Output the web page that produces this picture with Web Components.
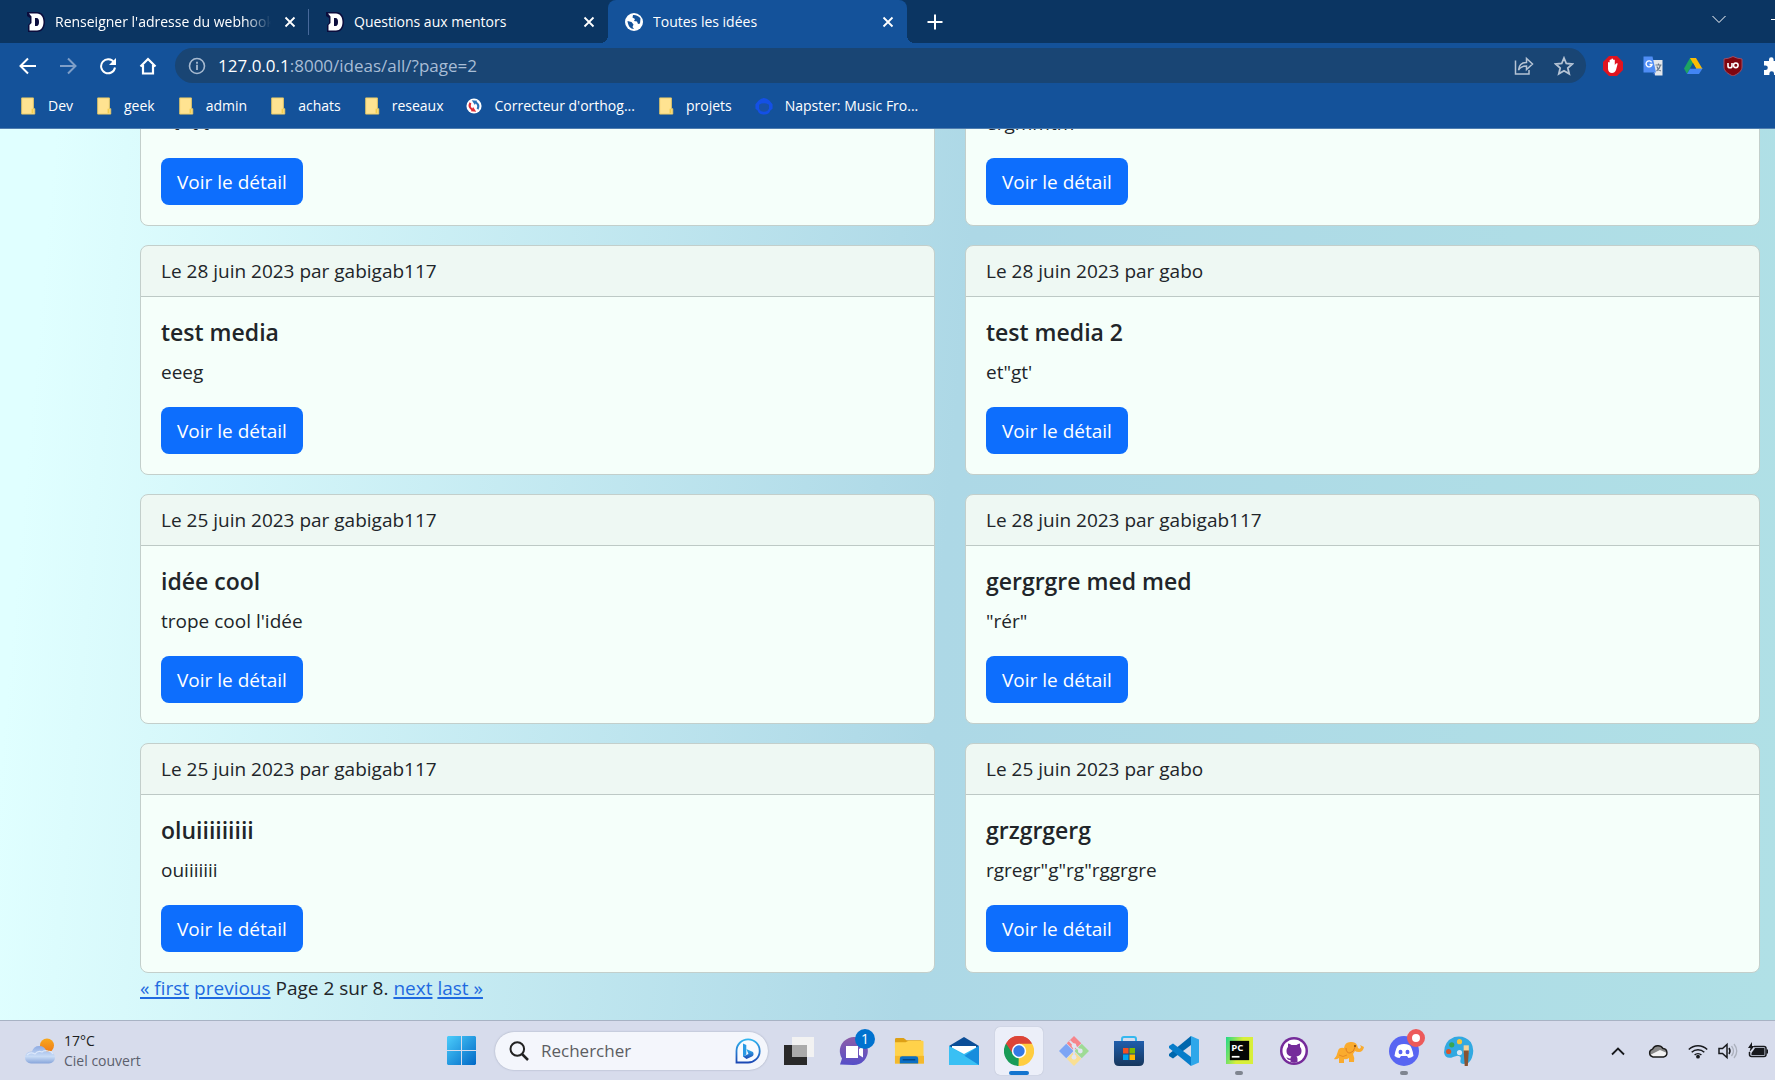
<!DOCTYPE html>
<html lang="fr">
<head>
<meta charset="utf-8">
<title>Toutes les idées</title>
<style>
  html, body { height: 100%; margin: 0; }
  body {
    display: flex;
    flex-direction: column;
    overflow: hidden;
    font-family: "Open Sans", "Noto Sans", sans-serif;
    color: #212529;
  }
</style>
</head>
<body>
<browser-chrome></browser-chrome>
<ideas-page>
  <idea-card author="gabigab117" date="28 juin 2023" heading="test">"'t"'t't"</idea-card>
  <idea-card author="gabo" date="28 juin 2023" heading="test">ergmmtm</idea-card>
  <idea-card author="gabigab117" date="28 juin 2023" heading="test media">eeeg</idea-card>
  <idea-card author="gabo" date="28 juin 2023" heading="test media 2">et"gt'</idea-card>
  <idea-card author="gabigab117" date="25 juin 2023" heading="idée cool">trope cool l'idée</idea-card>
  <idea-card author="gabigab117" date="28 juin 2023" heading="gergrgre med med">"rér"</idea-card>
  <idea-card author="gabigab117" date="25 juin 2023" heading="oluiiiiiiiii">ouiiiiiii</idea-card>
  <idea-card author="gabo" date="25 juin 2023" heading="grzgrgerg">rgregr"g"rg"rggrgre</idea-card>
  <page-nav slot="nav"></page-nav>
</ideas-page>
<task-bar></task-bar>

<script>
// Icônes partagées : [viewBox, contenu]
const ICONS = {
  site: ['0 0 20 20', '<path d="M1 0h10c5 0 8 4 8 10s-3 10-8 10H2v-7l2-2V6L1 4z" fill="#0b0c3c"/><path d="M3 1.500h8c4 0 6.500 3.500 6.500 8.500s-2.500 8.500-6.500 8.500H3.500v-5.500L5.500 11V4.500zM9 6v8h1.500c2 0 2.500-2 2.500-4s-.5-4-2.500-4z" fill="#fff" fill-rule="evenodd"/>'],
  globe: ['0 0 20 20', '<circle cx="10" cy="10" r="9" fill="#fff"/><path d="M3.500 9l4 1 2 2.500-1 2.500 1.500 2c-3.500 0-6-3-6.500-8zM9 3l-.5 2.500L11 7l-1 2 3 .5 1 2.500 2-.5.500-5C15 4 12 2.800 9 3z" fill="#14529a"/>'],
  close: ['0 0 12 12', '<path d="M1.500 1.500l9 9M10.500 1.500l-9 9" stroke="#fff" stroke-width="1.800"/>'],
  plus: ['0 0 16 16', '<path d="M8 .5v15M.5 8h15" stroke="#fff" stroke-width="2"/>'],
  chevronDown: ['0 0 14 14', '<path d="M.5 4L7 10.500 13.500 4" fill="none" stroke="#fff"/>'],
  minimize: ['0 0 12 12', '<path d="M0 6.500h12" stroke="#fff"/>'],
  back: ['0 0 18 18', '<path d="M17 9H2M9 1.500L1.500 9 9 16.500" fill="none" stroke="#fff" stroke-width="2"/>'],
  forward: ['0 0 18 18', '<path d="M1 9h15M9 1.500L16.500 9 9 16.500" fill="none" stroke="#7f9fc8" stroke-width="2"/>'],
  reload: ['0 0 18 18', '<path d="M15 5.500A7 7 0 1 0 16 10.500" fill="none" stroke="#fff" stroke-width="2"/><path d="M17 1v7h-7z" fill="#fff"/>'],
  home: ['0 0 18 18', '<path d="M1.500 9.500L9 2l7.500 7.500M4 8v8.500h10V8" fill="none" stroke="#fff" stroke-width="2.200"/>'],
  info: ['0 0 18 18', '<circle cx="9" cy="9" r="7.500" fill="none" stroke="#a7bad0" stroke-width="1.600"/><path d="M9 7.800v5.200M9 4.800v1.900" stroke="#a7bad0" stroke-width="1.800"/>'],
  share: ['0 0 20 20', '<path d="M1.500 4.500V18H15v-4M4.500 14C5 9 8 6.500 12.500 6.500V2.500L18.500 8l-6 5.500V10C9 10 6.500 11 4.500 14z" fill="none" stroke="#b5c3d4" stroke-width="1.500"/>'],
  star: ['0 0 20 20', '<path d="M10 2l2.300 5.500 6 .5-4.500 4 1.400 5.800L10 14.700l-5.200 3.100L6.200 12 1.700 8l6-.5z" fill="none" stroke="#b5c3d4" stroke-width="1.800"/>'],
  hand: ['0 0 20 20', '<path d="M6 0h8l6 6v8l-6 6H6l-6-6V6z" fill="#e1131f"/><path d="M5 10V6.500q.8-1 1.600 0V4q.9-1 1.700 0V3q.9-1 1.800 0v1q.9-1 1.700 0v5l1.200-1.500q1-.5 1.700 0L13 14q-1.200 3-4 3-3.500 0-4-4z" fill="#fff"/>'],
  translate: ['0 0 20 20', '<path d="M9 4h10.500v15.500H12z" fill="#e3e6ea"/><path d="M11 17l1.500 3-3-3z" fill="#3367d6"/><path d="M12.500 9h6M15.500 7.500V9M17.500 9q-1 4-4 6M13.800 10.500q1.500 3.500 4 4.500" fill="none" stroke="#68788a" stroke-width="1.200"/><path d="M.5.500h9L13 16.500H.5z" fill="#4f8df5"/><path d="M8.600 6.300A3 3 0 1 0 9 8.500H6.500" fill="none" stroke="#fff" stroke-width="1.400"/>'],
  drive: ['0 0 20 20', '<path d="M7 2h6L4 18l-3-5.500z" fill="#1da462"/><path d="M7 2h6l6.500 11h-6.300z" fill="#fbbc04"/><path d="M4 18l3.200-5.500H19.500L16 18z" fill="#4285f4"/><path d="M10 7l3.200 5.500H7.200z" fill="#14529a"/>'],
  shield: ['0 0 20 20', '<path d="M10 .5q4 2 9 2.500v8c0 4-4 7-9 9-5-2-9-5-9-9V3q5-.5 9-2.500z" fill="#800610" stroke="#a34d61"/><path d="M5 7v3q0 1.800 2 1.800t2-1.800V7" fill="none" stroke="#fff" stroke-width="1.600"/><circle cx="12.800" cy="9.300" r="2.300" fill="none" stroke="#fff" stroke-width="1.600"/>'],
  puzzle: ['0 0 20 20', '<path d="M1 5h5V3.500a2.300 2.300 0 0 1 4.600 0V5H16v5h1a2.300 2.300 0 0 1 0 4.600h-1V19h-5v-1.500a2.300 2.300 0 0 0-4.600 0V19H1v-5h1.500a2.300 2.300 0 0 0 0-4.600H1z" fill="#fff"/>'],
  folder: ['0 0 16 20', '<path d="M1 1h13v12h1.500v6H1z" fill="#ffe391" stroke="#e9c964"/><path d="M12 18v-5h2v5z" fill="#f3cd4d"/>'],
  orthog: ['0 0 18 18', '<circle cx="9" cy="9" r="8.500" fill="#fff"/><path d="M5 5.500Q2.500 10 7 13" fill="none" stroke="#df2d35" stroke-width="2.400"/><path d="M8 10l3.500 5.500-6-.5z" fill="#df2d35"/><path d="M13 12.500Q15.500 8 11 5" fill="none" stroke="#2a74b8" stroke-width="2.400"/><path d="M10 8L6.500 2.500l6 .5z" fill="#2a74b8"/>'],
  napster: ['0 0 20 20', '<path d="M4 4Q10-2 16 4l3.500 4v5L17 15q-1 4.500-7 4.500T3 15L.5 13V8z" fill="#1450e6"/><path d="M4.500 8.500q5.500-3 11 0v4q-1 4-5.500 4t-5.500-4z" fill="#1851a7"/>'],

  weather: ['0 0 30 26', '<defs><linearGradient id="c" x2="0" y2="1"><stop stop-color="#8eabe2"/><stop offset=".6" stop-color="#c9dcf6"/><stop offset="1" stop-color="#87a5da"/></linearGradient><linearGradient id="s" x2="0" y2="1"><stop stop-color="#f8a81b"/><stop offset="1" stop-color="#ee7a19"/></linearGradient></defs><circle cx="22" cy="7.500" r="7" fill="url(#s)"/><path d="M6 25.500a6 6 0 0 1 0-12h1a7.500 7.500 0 0 1 14.500 0H24a6 6 0 0 1 0 12z" fill="url(#c)"/><path d="M2 17q3-3.500 8-1 3-4 7-2 2-2 6-1 3 0 5 3" fill="none" stroke="#dce8fb" stroke-width="1.200"/>'],
  start: ['0 0 29 29', '<defs><linearGradient id="w" x2="1" y2="1"><stop stop-color="#4ccdfb"/><stop offset="1" stop-color="#0068c6"/></linearGradient></defs><path d="M1 0h13v14H0V1zM15 0h13l1 1v13H15zM0 15h14v14H1l-1-1zM15 15h14v13l-1 1H15z" fill="url(#w)"/>'],
  search: ['0 0 20 20', '<circle cx="8.300" cy="8" r="6.800" fill="none" stroke="#222" stroke-width="2"/><path d="M13 13l6 6" stroke="#222" stroke-width="2.500"/>'],
  bing: ['0 0 26 26', '<defs><linearGradient id="b" x2="0" y2="1"><stop stop-color="#31b5f0"/><stop offset="1" stop-color="#1c48b4"/></linearGradient></defs><path d="M1.500 24.500V13A11.600 11.600 0 1 1 13 24.500z" fill="#f8fbff" stroke="url(#b)" stroke-width="1.800"/><path d="M8 5.500l3.300 1.500v9.500L8 19z" fill="#299ae5"/><path d="M11.300 11l6.700 3q1.500 3-1 4.500L11.500 21 8 18.500l5.500-2.500z" fill="url(#b)"/>'],
  taskview: ['0 0 30 28', '<path d="M0 8h23v20H0z" fill="#292929"/><path d="M8 0h22v20H8z" fill="#f2f2f2"/><path d="M8 8h15v12H8z" fill="#aaa"/>'],
  chat: ['0 0 30 30', '<defs><linearGradient id="p" x2="0" y2="1"><stop stop-color="#8d5da8"/><stop offset="1" stop-color="#554ec8"/></linearGradient></defs><path d="M1 28.500l2-6A14 14 0 1 1 14 29z" fill="url(#p)"/><path d="M7 10h12v12H7zM20 13l4-2.500v11L20 19z" fill="#fff"/>'],
  explorer: ['0 0 31 28', '<path d="M1 2q0-1.500 1.500-1.500H10L13 3h15v8H1z" fill="#dda016"/><path d="M1 5h11l3-1.500h14.500q1 0 1 1V27H1z" fill="#ffd24a"/><path d="M1 19h30v8H1z" fill="#f4b92c"/><path d="M6 27v-5q0-2.500 2.500-2.500h14q2.500 0 2.500 2.500v5z" fill="#0a6fc5"/><path d="M9 23h13" stroke="#034785" stroke-width="1.500"/>'],
  mail: ['0 0 30 28', '<path d="M0 9L15 0l15 9v5H0z" fill="#0b4e97"/><path d="M3 9h24v12H3z" fill="#fff"/><path d="M0 9l15 8 15-8v19H0z" fill="#32baf1"/><path d="M30 9v19L2 28z" fill="#178ddd"/><path d="M0 9l30 19H0z" fill="#39c0f4"/>'],
  chrome: ['0 0 30 30', '<path d="M15 15L2 7.500A15 15 0 0 1 28 7.500z" fill="#dc4437"/><path d="M15 15L2 7.500A15 15 0 0 0 15 30l6.500-11z" fill="#199b57"/><path d="M15 15l-.5 15A15 15 0 0 0 28 7.500H15l6.500 11z" fill="#ffcd40"/><path d="M2 7.500L9 18l6-10.500h13A15 15 0 0 0 2 7.500z" fill="#dc4437"/><circle cx="15" cy="15" r="7.200" fill="#fff"/><circle cx="15" cy="15" r="5.700" fill="#3579e5"/>'],
  git: ['0 0 31 31', '<path d="M15.500 0l7.500 7.500-7.500 7.500L8 7.500z" fill="#f6858b"/><path d="M7.500 8l7.500 7.500L7.500 23 0 15.500z" fill="#7da5f5"/><path d="M23.500 8l7.500 7.500-7.500 7.500-7.500-7.500z" fill="#9edb95"/><path d="M15.500 16l7.500 7.500-7.500 7.500L8 23.500z" fill="#f9df93"/><path d="M11 5l4.500 4.500V22M16 10l6 5" fill="none" stroke="#dde1ef" stroke-width="2"/><circle cx="15.500" cy="10" r="2.500" fill="#e2e6f2"/><circle cx="22" cy="15.500" r="2.500" fill="#e2e6f2"/><circle cx="15.500" cy="22" r="2.500" fill="#e2e6f2"/>'],
  store: ['0 0 30 30', '<defs><linearGradient id="m" x2="0" y2="1"><stop stop-color="#205eac"/><stop offset="1" stop-color="#17375d"/></linearGradient></defs><path d="M8 6V3q0-2 2-2h10q2 0 2 2v3" fill="none" stroke="#36b8ef" stroke-width="2"/><path d="M0 5h30v20q0 5-5 5H5q-5 0-5-5z" fill="url(#m)"/><path d="M9 12h5.500v5.500H9z" fill="#f25022"/><path d="M15.500 12H21v5.500h-5.500z" fill="#7fba00"/><path d="M9 18.500h5.500V24H9z" fill="#00a4ef"/><path d="M15.500 18.500H21V24h-5.500z" fill="#ffb900"/>'],
  vscode: ['0 0 30 30', '<path d="M22 0l8 3.500v23L22 30z" fill="#2fa7ea"/><path d="M22 0v9L4 22.500 0 20v-2z" fill="#0067ad"/><path d="M22 30v-9L4 7.500 0 10v2z" fill="#087dca"/>'],
  pycharm: ['0 0 28 28', '<defs><linearGradient id="y" x2="1" y2=".3"><stop stop-color="#21d789"/><stop offset=".6" stop-color="#d8ef3a"/></linearGradient></defs><path d="M0 0h28v28H0z" fill="url(#y)"/><path d="M4 4h20v20H4z" fill="#050505"/><text x="5.500" y="14.500" font-family="Open Sans" font-size="10" font-weight="700" fill="#fff">PC</text><path d="M6 20.500h8" stroke="#fff" stroke-width="1.800"/>'],
  github: ['0 0 28 28', '<circle cx="14" cy="14" r="14" fill="#752b9a"/><circle cx="14" cy="14" r="11.500" fill="#fff"/><path d="M6.500 14c0-2 .5-3 1.500-4V6.500q2 0 3.500 1.500h5Q18 6.500 20 6.500V10c1 1 1.500 2 1.500 4 0 4-2.500 5-5 5.300l1 2.200v3.700A11.500 11.500 0 0 1 10.500 25v-2c-3 .5-3-2-4.500-2.500 2-.5 2.500 1.500 4.500 1 0-1 .5-1.700 1-2.200-2.500-.3-5-1.300-5-5.300z" fill="#752b9a"/>'],
  elephant: ['0 0 30 24', '<path d="M10 9q1-7 8-6 5 0 6 6 2 2 3-1l-1-2 4 2q-1 5-5 5-3 0-4-1l-2 3q2 4 1 8h-5v-4q-3 2-5 1v4H5v-5q-3 2-5 1 3-3 4-8 1-4 6-3z" fill="#faab2e"/><path d="M12 9q0 5 4 5 4-1 5-6" fill="none" stroke="#df8022"/><circle cx="21" cy="7" r="1" fill="#7c4208"/><path d="M5 16q4 3 8 0" fill="none" stroke="#e68c26"/>'],
  discord: ['0 0 30 30', '<circle cx="15" cy="15" r="15" fill="#5865f2"/><path d="M10 9q5-2 10 0 3 1 4.500 11-2.500 2-5 2l-1.500-2h-6l-1.500 2q-2.500 0-5-2Q7 10 10 9z" fill="#fff"/><ellipse cx="11.500" cy="16" rx="2" ry="2.300" fill="#5865f2"/><ellipse cx="18.500" cy="16" rx="2" ry="2.300" fill="#5865f2"/>'],
  paint: ['0 0 29 29', '<path d="M10 1Q20-1 26 6q4 7 1 15-2 6-8 6-4 0-3-4 1-4-3-4-4 1-6 2-6 1-7-5Q0 5 10 1z" fill="#32a9e1"/><circle cx="15" cy="16" r="2.500" fill="#d8e9f5"/><circle cx="4.500" cy="15" r="2.500" fill="#d4552d"/><circle cx="7.500" cy="8.500" r="2.500" fill="#38a650"/><circle cx="15" cy="5.500" r="2.500" fill="#f5c43b"/><path d="M19 9h5v7h-5z" fill="#f3d39a"/><path d="M19 14h5l-1 15h-3z" fill="#875333"/>'],
  chevronUp: ['0 0 20 20', '<path d="M4 13.500l6-6 6 6" fill="none" stroke="#17191d" stroke-width="1.800"/>'],
  cloud: ['0 0 20 20', '<path d="M5 16a4 4 0 0 1-.5-7.800 6 6 0 0 1 10.500-.7A4.300 4.300 0 0 1 15.500 16z" fill="#888"/><path d="M2 14l10-5 7 3q-1 4-4 4H5q-2 0-3-2z" fill="#f2f2f2"/><path d="M5 16a4 4 0 0 1-.5-7.800 6 6 0 0 1 10.500-.7A4.300 4.300 0 0 1 15.500 16z" fill="none" stroke="#1a1a1a" stroke-width="1.400"/>'],
  wifi: ['0 0 20 20', '<path d="M.8 8.500a13 13 0 0 1 18.400 0M3.700 11.300a9 9 0 0 1 12.600 0M6.600 14a5 5 0 0 1 6.800 0" fill="none" stroke="#17191d" stroke-width="1.500"/><circle cx="10" cy="15.700" r="1.900" fill="#17191d"/>'],
  volume: ['0 0 20 20', '<path d="M1 7.500h3.500L9 3.500v13l-4.500-4H1z" fill="none" stroke="#17191d" stroke-width="1.500"/><path d="M11 7q2 3 0 6" fill="none" stroke="#17191d" stroke-width="1.500"/><path d="M13.500 5q4 5 0 10M16 3q5.500 7 0 14" fill="none" stroke="#abb0bc" stroke-width="1.300"/>'],
  battery: ['0 0 20 20', '<path d="M6 5.500h10q2 0 2 2v6q0 2-2 2H3.500q-2 0-2-2V11" fill="none" stroke="#17191d" stroke-width="1.500"/><path d="M7 7h9.500v7H3.500v-2z" fill="#17191d"/><path d="M18.500 8.500H20v4h-1.500zM4 1L0 7h2.500L1.500 11 6.500 5H4z" fill="#17191d"/>'],
};

// <ui-icon name w h> : un SVG tiré de la table ci-dessus
class UiIcon extends HTMLElement {
  constructor() {
    super();
    this.attachShadow({ mode: 'open' });
  }

  connectedCallback() {
    const [box, body] = ICONS[this.getAttribute('name')];
    const w = this.getAttribute('w') || 20;
    const h = this.getAttribute('h') || w;
    this.shadowRoot.innerHTML = `
      <style>
        :host { display: block; flex: none; width: ${w}px; height: ${h}px; }
        svg { display: block; width: 100%; height: 100%; }
      </style>
      <svg viewBox="${box}" aria-hidden="true">${body}</svg>
    `;
  }
}
customElements.define('ui-icon', UiIcon);

class BrowserTab extends HTMLElement {
  constructor() {
    super();
    this.attachShadow({ mode: 'open' });
  }

  connectedCallback() {
    this.shadowRoot.innerHTML = `
      <style>
        :host {
          display: flex;
          position: relative;
          align-items: center;
          gap: 9px;
          box-sizing: border-box;
          width: 299px;
          height: 43px;
          padding: 0 9px 0 16px;
          color: #fff;
          font-size: 14px;
          line-height: 20px;
        }
        :host([separator]) { background: linear-gradient(#47699b, #47699b) right center / 1px 26px no-repeat; }
        :host([active]) { background: #14529a; border-radius: 8px 8px 0 0; }
        /* pieds arrondis de l'onglet actif */
        :host([active])::before, :host([active])::after {
          content: ""; position: absolute; bottom: 0; width: 8px; height: 8px;
        }
        :host([active])::before { right: 100%; background: radial-gradient(circle at 0 0, transparent 8px, #14529a 8px); }
        :host([active])::after { left: 100%; background: radial-gradient(circle at 100% 0, transparent 8px, #14529a 8px); }
        .title { flex: 1; min-width: 0; overflow: hidden; white-space: nowrap; }
        :host([faded]) .title { -webkit-mask-image: linear-gradient(to left, transparent, #000 26px); mask-image: linear-gradient(to left, transparent, #000 26px); }
        button { padding: 4px; border: 0; background: none; }
      </style>
      <ui-icon name="${this.getAttribute('icon')}" w="20"></ui-icon>
      <span class="title"><slot></slot></span>
      <button aria-label="Fermer l'onglet"><ui-icon name="close" w="12"></ui-icon></button>
    `;
  }
}
customElements.define('browser-tab', BrowserTab);

class BrowserChrome extends HTMLElement {
  constructor() {
    super();
    this.attachShadow({ mode: 'open' });
  }

  connectedCallback() {
    const bookmarks = [
      ['folder', 16, 'Dev'], ['folder', 16, 'geek'], ['folder', 16, 'admin'],
      ['folder', 16, 'achats'], ['folder', 16, 'reseaux'],
      ['orthog', 16, "Correcteur d'orthog..."], ['folder', 16, 'projets'],
      ['napster', 18, 'Napster: Music Fro...']
    ];

    this.shadowRoot.innerHTML = `
      <style>
        :host { display: block; flex: none; overflow: hidden; background: #14529a; border-bottom: 1px solid #4f7daf; color: #fff; }
        button { display: block; padding: 0; border: 0; background: none; }
        .tabs { display: flex; align-items: center; height: 43px; padding-left: 10px; background: #0b3562; }
        .new { margin-left: 20px; }
        .window { display: flex; gap: 45px; margin: 0 -8px 6px auto; }
        .toolbar { display: flex; align-items: center; height: 45px; padding-left: 19px; margin-right: -8px; gap: 22px; }
        .address { display: flex; flex: 1; align-items: center; gap: 12px; height: 35px; margin-left: -4px; padding: 0 12px 0 13px; border-radius: 18px; background: #194574; }
        .address input { flex: 1; min-width: 0; padding: 0; border: 0; background: none; font: 17px/24px "Open Sans", sans-serif; color: #a8bdd6; }
        .url { display: flex; flex: 1; font-size: 17px; line-height: 24px; }
        .actions { display: flex; gap: 20px; }
        .extensions { display: flex; gap: 20px; margin-left: -5px; }
        .bookmarks { display: flex; align-items: center; height: 36px; padding: 0 20px 4px; gap: 23px; }
        .bookmarks a { display: flex; align-items: center; gap: 12px; color: #fff; font-size: 14px; line-height: 20px; text-decoration: none; white-space: nowrap; }
      </style>
      <div class="tabs">
        <browser-tab icon="site" faded separator>Renseigner l'adresse du webhook</browser-tab>
        <browser-tab icon="site">Questions aux mentors</browser-tab>
        <browser-tab icon="globe" active>Toutes les idées</browser-tab>
        <button class="new" aria-label="Nouvel onglet"><ui-icon name="plus" w="16"></ui-icon></button>
        <div class="window">
          <button aria-label="Rechercher des onglets"><ui-icon name="chevronDown" w="14"></ui-icon></button>
          <button aria-label="Réduire"><ui-icon name="minimize" w="12"></ui-icon></button>
        </div>
      </div>
      <div class="toolbar">
        <button aria-label="Retour"><ui-icon name="back" w="18"></ui-icon></button>
        <button aria-label="Avancer"><ui-icon name="forward" w="18"></ui-icon></button>
        <button aria-label="Actualiser"><ui-icon name="reload" w="18"></ui-icon></button>
        <button aria-label="Accueil"><ui-icon name="home" w="18"></ui-icon></button>
        <div class="address">
          <ui-icon name="info" w="18"></ui-icon>
          <div class="url"><span>127.0.0.1</span><input aria-label="Adresse" value=":8000/ideas/all/?page=2"></div>
          <div class="actions">
            <button aria-label="Partager"><ui-icon name="share" w="20"></ui-icon></button>
            <button aria-label="Ajouter aux favoris"><ui-icon name="star" w="20"></ui-icon></button>
          </div>
        </div>
        <div class="extensions">
          ${['hand', 'translate', 'drive', 'shield', 'puzzle'].map((name) => `
            <button aria-label="${name}"><ui-icon name="${name}" w="20"></ui-icon></button>`).join('')}
        </div>
      </div>
      <nav class="bookmarks">
        ${bookmarks.map(([icon, size, label]) => `
          <a href="#"><ui-icon name="${icon}" w="${size}" h="18"></ui-icon>${label}</a>`).join('')}
      </nav>
    `;
  }
}
customElements.define('browser-chrome', BrowserChrome);

// Carte Bootstrap : date + auteur, titre, texte (slot) et bouton
class IdeaCard extends HTMLElement {
  constructor() {
    super();
    this.attachShadow({ mode: 'open' });
  }

  connectedCallback() {
    this.shadowRoot.innerHTML = `
      <style>
        :host { display: block; overflow: hidden; border: 1px solid #c3cfcb; border-radius: 8px; background: #f5fffa; font-size: 19px; line-height: 30px; }
        header { padding: 10px 20px; border-bottom: 1px solid #bdc9c5; background: rgba(33, 37, 41, 0.03); }
        .body { padding: 20px; }
        h5 { margin: 0 0 10px; font-size: 23px; font-weight: 600; line-height: 30px; }
        p { margin: 0 0 20px; }
        button { display: block; height: 47px; padding: 0 16px; border: 0; border-radius: 8px; background: #0d6efd; color: #fff; font: inherit; }
      </style>
      <header>Le ${this.getAttribute('date')} par ${this.getAttribute('author')}</header>
      <div class="body">
        <h5>${this.getAttribute('heading')}</h5>
        <p><slot></slot></p>
        <button>Voir le détail</button>
      </div>
    `;
  }
}
customElements.define('idea-card', IdeaCard);

class PageNav extends HTMLElement {
  constructor() {
    super();
    this.attachShadow({ mode: 'open' });
    this.shadowRoot.innerHTML = `
      <style>
        :host { display: block; font-size: 19px; line-height: 30px; }
        a { color: #1f6ae0; text-decoration-thickness: 2px; text-underline-offset: 2px; }
      </style>
      <a href="?page=1">&laquo; first</a>
      <a href="?page=1">previous</a>
      <span>Page 2 sur 8.</span>
      <a href="?page=3">next</a>
      <a href="?page=8">last &raquo;</a>
    `;
  }
}
customElements.define('page-nav', PageNav);

class IdeasPage extends HTMLElement {
  constructor() {
    super();
    this.attachShadow({ mode: 'open' });
    // La page est défilée jusqu'en bas : contenu aligné sur la fin.
    this.shadowRoot.innerHTML = `
      <style>
        :host {
          display: flex;
          flex: 1;
          flex-direction: column;
          justify-content: flex-end;
          min-height: 0;
          overflow: hidden;
          padding: 0 15px 17px 140px;
          background: linear-gradient(95deg, #e0ffff 3%, #add8e6 53%, #b0e0e6);
        }
        .grid { display: grid; grid-template-columns: 1fr 1fr; gap: 19px 30px; }
      </style>
      <div class="grid"><slot></slot></div>
      <slot name="nav"></slot>
    `;
  }
}
customElements.define('ideas-page', IdeasPage);

class TaskApp extends HTMLElement {
  constructor() {
    super();
    this.attachShadow({ mode: 'open' });
  }

  connectedCallback() {
    const name = this.getAttribute('icon');
    const badge = this.getAttribute('badge');
    this.shadowRoot.innerHTML = `
      <style>
        :host { display: block; position: relative; flex: none; }
        button { display: grid; place-items: center; width: 48px; height: 48px; padding: 0; border: 0; border-radius: 5px; background: none; }
        :host([active]) button { background: #eceff9; box-shadow: 0 0 1px #9da4b8; }
        :host([active])::after, :host([running])::after {
          content: ""; position: absolute; bottom: 0; left: 50%; width: 8px; height: 4px; margin-left: -4px; border-radius: 2px; background: #7f8590;
        }
        :host([active])::after { width: 20px; margin-left: -10px; background: #1475cf; }
        .badge { position: absolute; top: 2px; right: 3px; width: 20px; height: 20px; border-radius: 50%; background: #0072cf; color: #fff; font-size: 14px; line-height: 20px; text-align: center; }
        .badge.dot { box-sizing: border-box; width: 18px; height: 18px; border: 5px solid #ed5a5a; background: #fff; }
      </style>
      <button aria-label="${name}"><ui-icon name="${name}" w="${this.getAttribute('size') || 30}"></ui-icon></button>
      ${badge === null ? '' : `<span class="badge ${badge ? '' : 'dot'}">${badge}</span>`}
    `;
  }
}
customElements.define('task-app', TaskApp);

class TaskBar extends HTMLElement {
  constructor() {
    super();
    this.attachShadow({ mode: 'open' });
    this.shadowRoot.innerHTML = `
      <style>
        :host { display: grid; flex: none; grid-template-columns: 437px 1fr auto; align-items: center; height: 59px; border-top: 1px solid #a8b3c4; background: #d7dcec; }
        .weather { display: flex; align-items: center; gap: 9px; padding: 0 25px; font-size: 14px; line-height: 20px; }
        .weather div { color: #5b5f6c; }
        .weather strong { display: block; color: #1b1c20; font-weight: 400; }
        .apps { display: flex; align-items: center; gap: 7px; }
        .search { display: flex; flex: none; align-items: center; gap: 12px; box-sizing: border-box; width: 273px; height: 38px; margin-left: 3px; padding: 0 7px 0 14px; border-radius: 19px; background: #f4f6fc; box-shadow: 0 0 2px #9da4b8; }
        .search input { flex: 1; min-width: 0; padding: 0; border: 0; background: none; font: 17px/24px "Open Sans", sans-serif; }
        .search input::placeholder { color: #5c5d62; opacity: 1; }
        .tray { display: flex; align-items: center; gap: 20px; padding-right: 7px; }
        .status { display: flex; gap: 10px; }
      </style>
      <div class="weather">
        <ui-icon name="weather" w="30" h="26"></ui-icon>
        <div><strong>17°C</strong>Ciel couvert</div>
      </div>
      <div class="apps">
        <task-app icon="start" size="29"></task-app>
        <label class="search">
          <ui-icon name="search" w="20"></ui-icon>
          <input type="search" placeholder="Rechercher" aria-label="Rechercher">
          <ui-icon name="bing" w="26"></ui-icon>
        </label>
        <task-app icon="taskview"></task-app>
        <task-app icon="chat" badge="1"></task-app>
        <task-app icon="explorer"></task-app>
        <task-app icon="mail"></task-app>
        <task-app icon="chrome" active></task-app>
        <task-app icon="git"></task-app>
        <task-app icon="store"></task-app>
        <task-app icon="vscode"></task-app>
        <task-app icon="pycharm" size="27" running></task-app>
        <task-app icon="github" size="28"></task-app>
        <task-app icon="elephant"></task-app>
        <task-app icon="discord" badge="" running></task-app>
        <task-app icon="paint"></task-app>
      </div>
      <div class="tray">
        <ui-icon name="chevronUp"></ui-icon>
        <ui-icon name="cloud"></ui-icon>
        <div class="status">
          <ui-icon name="wifi"></ui-icon>
          <ui-icon name="volume"></ui-icon>
          <ui-icon name="battery"></ui-icon>
        </div>
      </div>
    `;
  }
}
customElements.define('task-bar', TaskBar);
</script>
</body>
</html>
